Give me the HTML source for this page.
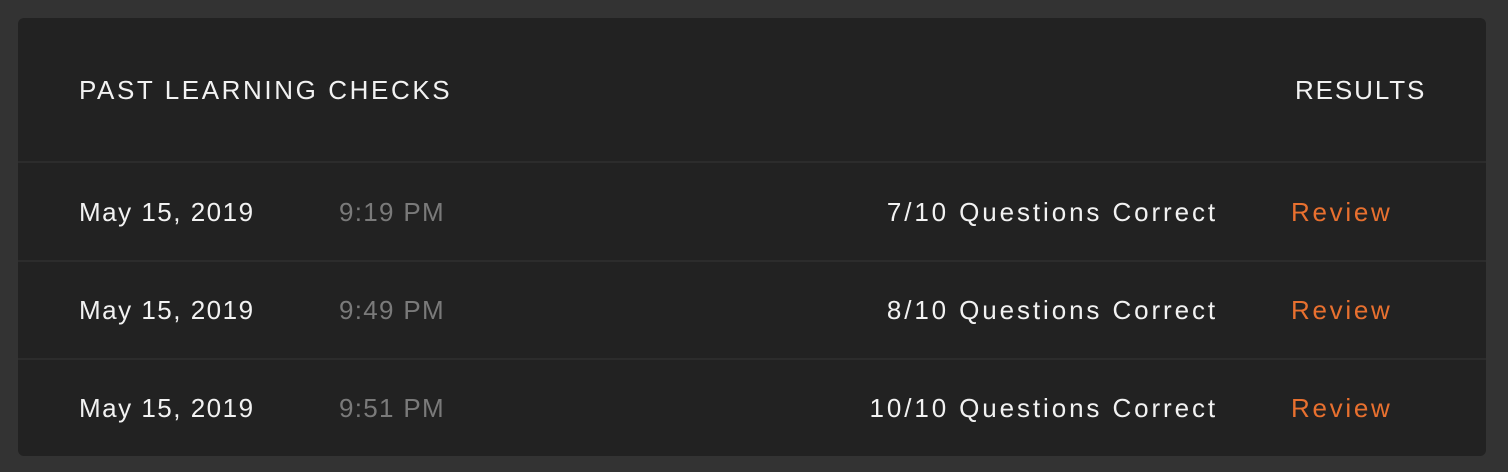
<!DOCTYPE html>
<html><head><style>
html,body{margin:0;padding:0;}
body{width:1508px;height:472px;background:#333;font-family:"Liberation Sans",sans-serif;position:relative;overflow:hidden;}
.card{position:absolute;left:18px;top:18px;width:1468px;height:438px;background:#222;border-radius:6px;}
.t{position:absolute;white-space:nowrap;font-size:26px;line-height:30px;color:#f2f2f2;}
.line{position:absolute;left:0;width:1468px;height:2px;background:#2c2c2c;}
.d{letter-spacing:1.5px;}
.g{color:#7a7a7a;letter-spacing:1.3px;}
.o{color:#e8702f;letter-spacing:2.7px;}
.r{text-align:right;width:500px;letter-spacing:2.9px;}
</style></head><body>
<div class="card">
<div class="t" style="left:61px;top:57px;letter-spacing:2.6px;">PAST LEARNING CHECKS</div>
<div class="t" style="left:1277px;top:57px;letter-spacing:1.9px;">RESULTS</div>
<div class="line" style="top:143px"></div>
<div class="t d" style="left:61px;top:179px;">May 15, 2019</div>
<div class="t g" style="left:321px;top:179px;">9:19 PM</div>
<div class="t r" style="left:700px;top:179px;">7/10 Questions Correct</div>
<div class="t o" style="left:1273px;top:179px;">Review</div>
<div class="line" style="top:242px"></div>
<div class="t d" style="left:61px;top:277px;">May 15, 2019</div>
<div class="t g" style="left:321px;top:277px;">9:49 PM</div>
<div class="t r" style="left:700px;top:277px;">8/10 Questions Correct</div>
<div class="t o" style="left:1273px;top:277px;">Review</div>
<div class="line" style="top:340px"></div>
<div class="t d" style="left:61px;top:375px;">May 15, 2019</div>
<div class="t g" style="left:321px;top:375px;">9:51 PM</div>
<div class="t r" style="left:700px;top:375px;">10/10 Questions Correct</div>
<div class="t o" style="left:1273px;top:375px;">Review</div>
</div>
</body></html>
